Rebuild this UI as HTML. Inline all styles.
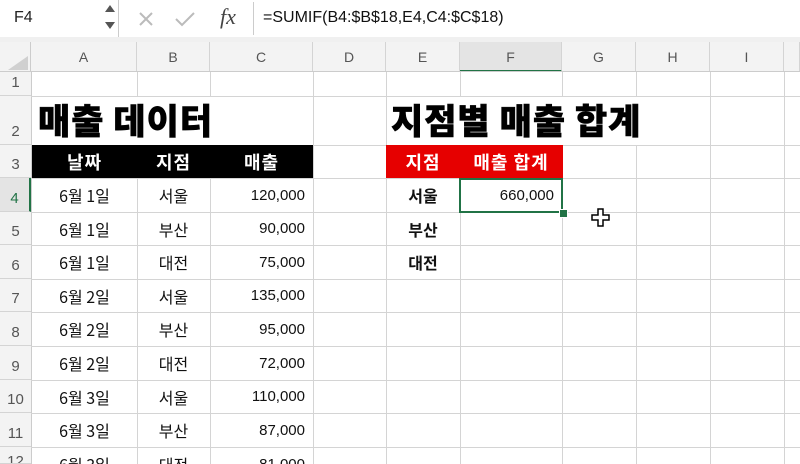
<!DOCTYPE html>
<html><head><meta charset="utf-8"><style>
html,body{margin:0;width:800px;height:464px;overflow:hidden}
body{background:#fff;font-family:"Liberation Sans","Noto Sans CJK KR",sans-serif;position:relative}
.a{position:absolute}
.vl{position:absolute;top:72px;width:1px;height:392px;background:#d4d4d4}
.hl{position:absolute;left:31px;width:769px;height:1px;background:#d4d4d4}
.ch{position:absolute;top:42px;height:30px;line-height:30px;text-align:center;font-size:14px;color:#555;border-right:1px solid #d4d4d4;box-sizing:border-box;background:#f3f3f3}
.rh{position:absolute;left:0;width:31px;font-size:15px;color:#555;text-align:center;background:#f3f3f3;border-bottom:1px solid #d4d4d4;box-sizing:border-box;display:flex;align-items:flex-end;justify-content:center;padding-bottom:4px;overflow:hidden}
.c{position:absolute;font-size:15px;color:#111;display:flex;align-items:center;justify-content:center;line-height:1;white-space:nowrap}
.k{font-size:16px}
.r{justify-content:flex-end;padding-right:8px;box-sizing:border-box}
.k{font-family:"Noto Sans CJK KR",sans-serif}
.b{font-weight:bold}
.w{color:#fff;font-weight:bold;font-size:18px;letter-spacing:1px}
</style></head><body>
<div class="a" style="left:0;top:0;width:800px;height:42px;background:#f0f0f0"></div>
<div class="a" style="left:0;top:0;width:118px;height:37px;background:#fff;border-right:1px solid #ccc"></div>
<div class="a" style="left:14px;top:9px;font-size:16px;color:#222">F4</div>
<div class="a" style="left:105px;top:5px;width:0;height:0;border-left:5px solid transparent;border-right:5px solid transparent;border-bottom:7px solid #555"></div>
<div class="a" style="left:105px;top:22px;width:0;height:0;border-left:5px solid transparent;border-right:5px solid transparent;border-top:7px solid #555"></div>
<div class="a" style="left:119px;top:0;width:681px;height:37px;background:#fff"></div>
<svg class="a" style="left:138px;top:11px" width="16" height="16"><path d="M2 2L14 14M14 2L2 14" stroke="#bbb" stroke-width="2"/></svg>
<svg class="a" style="left:174px;top:11px" width="22" height="16"><path d="M2 8L8 14L20 2" stroke="#bbb" stroke-width="2" fill="none"/></svg>
<div class="a" style="left:220px;top:4px;font-size:22px;font-style:italic;font-family:'Liberation Serif',serif;color:#444">fx</div>
<div class="a" style="left:253px;top:2px;width:547px;height:33px;border-left:1px solid #ccc;background:#fff"></div>
<div class="a" style="left:263px;top:9px;font-size:16px;color:#111">=SUMIF(B4:$B$18,E4,C4:$C$18)</div>
<div class="a" style="left:0;top:42px;width:31px;height:30px;background:#f3f3f3;border-right:1px solid #ccc;box-sizing:border-box"></div>
<div class="a" style="left:8px;top:56px;width:0;height:0;border-left:20px solid transparent;border-bottom:14px solid #d0d0d0"></div>
<div class="ch" style="left:31px;width:106px">A</div>
<div class="ch" style="left:137px;width:73px">B</div>
<div class="ch" style="left:210px;width:103px">C</div>
<div class="ch" style="left:313px;width:73px">D</div>
<div class="ch" style="left:386px;width:74px">E</div>
<div class="ch" style="left:460px;width:102px;background:#e4e4e4;border-bottom:2px solid #217346">F</div>
<div class="ch" style="left:562px;width:74px">G</div>
<div class="ch" style="left:636px;width:74px">H</div>
<div class="ch" style="left:710px;width:74px">I</div>
<div class="ch" style="left:784px;width:16px"></div>
<div class="a" style="left:0;top:71px;width:800px;height:1px;background:#ccc"></div>
<div class="rh" style="top:72px;height:24px">1</div>
<div class="rh" style="top:96px;height:49px">2</div>
<div class="rh" style="top:145px;height:33px">3</div>
<div class="rh" style="top:178px;height:34px;background:#e4e4e4;color:#217346;border-right:2px solid #217346">4</div>
<div class="rh" style="top:212px;height:33px">5</div>
<div class="rh" style="top:245px;height:34px">6</div>
<div class="rh" style="top:279px;height:33px">7</div>
<div class="rh" style="top:312px;height:34px">8</div>
<div class="rh" style="top:346px;height:34px">9</div>
<div class="rh" style="top:380px;height:33px">10</div>
<div class="rh" style="top:413px;height:34px">11</div>
<div class="rh" style="top:447px;height:17px;align-items:flex-start;padding:6px 0 0">12</div>
<div class="a" style="left:31px;top:72px;width:1px;height:392px;background:#ccc"></div>
<div class="vl" style="left:137px"></div><div class="vl" style="left:210px"></div><div class="vl" style="left:313px"></div><div class="vl" style="left:386px"></div><div class="vl" style="left:460px"></div><div class="vl" style="left:562px"></div><div class="vl" style="left:636px"></div><div class="vl" style="left:710px"></div><div class="vl" style="left:784px"></div>
<div class="hl" style="top:96px"></div><div class="hl" style="top:145px"></div><div class="hl" style="top:178px"></div><div class="hl" style="top:212px"></div><div class="hl" style="top:245px"></div><div class="hl" style="top:279px"></div><div class="hl" style="top:312px"></div><div class="hl" style="top:346px"></div><div class="hl" style="top:380px"></div><div class="hl" style="top:413px"></div><div class="hl" style="top:447px"></div>
<div class="a" style="left:32px;top:97px;width:280px;height:48px;background:#fff"></div>
<div class="a" style="left:387px;top:97px;width:280px;height:48px;background:#fff"></div>
<div class="a k" style="left:38px;top:97px;font-size:35px;font-weight:900;color:#000;line-height:46px;letter-spacing:1px;-webkit-text-stroke:0.6px #000">매출 데이터</div>
<div class="a k" style="left:391px;top:97px;font-size:35px;font-weight:900;color:#000;line-height:46px;letter-spacing:1px;-webkit-text-stroke:0.6px #000">지점별 매출 합계</div>
<div class="a" style="left:32px;top:145px;width:281px;height:33px;background:#000"></div>
<div class="c k w" style="left:32px;top:145px;width:105px;height:33px">날짜</div>
<div class="c k w" style="left:137px;top:145px;width:73px;height:33px">지점</div>
<div class="c k w" style="left:210px;top:145px;width:103px;height:33px">매출</div>
<div class="a" style="left:386px;top:145px;width:177px;height:33px;background:#e60000"></div>
<div class="c k w" style="left:386px;top:145px;width:74px;height:33px">지점</div>
<div class="c k w" style="left:460px;top:145px;width:102px;height:33px">매출 합계</div>
<div class="c k" style="left:32px;top:178px;width:105px;height:34px">6월 1일</div><div class="c k" style="left:137px;top:178px;width:73px;height:34px">서울</div><div class="c r" style="left:210px;top:178px;width:103px;height:34px">120,000</div>
<div class="c k" style="left:32px;top:212px;width:105px;height:33px">6월 1일</div><div class="c k" style="left:137px;top:212px;width:73px;height:33px">부산</div><div class="c r" style="left:210px;top:212px;width:103px;height:33px">90,000</div>
<div class="c k" style="left:32px;top:245px;width:105px;height:34px">6월 1일</div><div class="c k" style="left:137px;top:245px;width:73px;height:34px">대전</div><div class="c r" style="left:210px;top:245px;width:103px;height:34px">75,000</div>
<div class="c k" style="left:32px;top:279px;width:105px;height:33px">6월 2일</div><div class="c k" style="left:137px;top:279px;width:73px;height:33px">서울</div><div class="c r" style="left:210px;top:279px;width:103px;height:33px">135,000</div>
<div class="c k" style="left:32px;top:312px;width:105px;height:34px">6월 2일</div><div class="c k" style="left:137px;top:312px;width:73px;height:34px">부산</div><div class="c r" style="left:210px;top:312px;width:103px;height:34px">95,000</div>
<div class="c k" style="left:32px;top:346px;width:105px;height:34px">6월 2일</div><div class="c k" style="left:137px;top:346px;width:73px;height:34px">대전</div><div class="c r" style="left:210px;top:346px;width:103px;height:34px">72,000</div>
<div class="c k" style="left:32px;top:380px;width:105px;height:33px">6월 3일</div><div class="c k" style="left:137px;top:380px;width:73px;height:33px">서울</div><div class="c r" style="left:210px;top:380px;width:103px;height:33px">110,000</div>
<div class="c k" style="left:32px;top:413px;width:105px;height:34px">6월 3일</div><div class="c k" style="left:137px;top:413px;width:73px;height:34px">부산</div><div class="c r" style="left:210px;top:413px;width:103px;height:34px">87,000</div>
<div class="c k" style="left:32px;top:447px;width:105px;height:34px">6월 3일</div><div class="c k" style="left:137px;top:447px;width:73px;height:34px">대전</div><div class="c r" style="left:210px;top:447px;width:103px;height:34px">81,000</div>
<div class="c k b" style="left:386px;top:178px;width:74px;height:34px">서울</div>
<div class="c k b" style="left:386px;top:212px;width:74px;height:33px">부산</div>
<div class="c k b" style="left:386px;top:245px;width:74px;height:34px">대전</div>
<div class="a" style="left:459px;top:178px;width:104px;height:35px;border:2px solid #217346;box-sizing:border-box"></div>
<div class="a" style="left:559px;top:209px;width:7px;height:7px;background:#217346;border:1px solid #fff"></div>
<div class="c r" style="left:460px;top:178px;width:102px;height:34px">660,000</div>
<svg class="a" style="left:590px;top:207px" width="22" height="22" viewBox="0 0 22 22"><path d="M8 2h5v6h6v5h-6v6H8v-6H2V8h6z" fill="#fff" stroke="#000" stroke-width="1.5"/></svg>
</body></html>
